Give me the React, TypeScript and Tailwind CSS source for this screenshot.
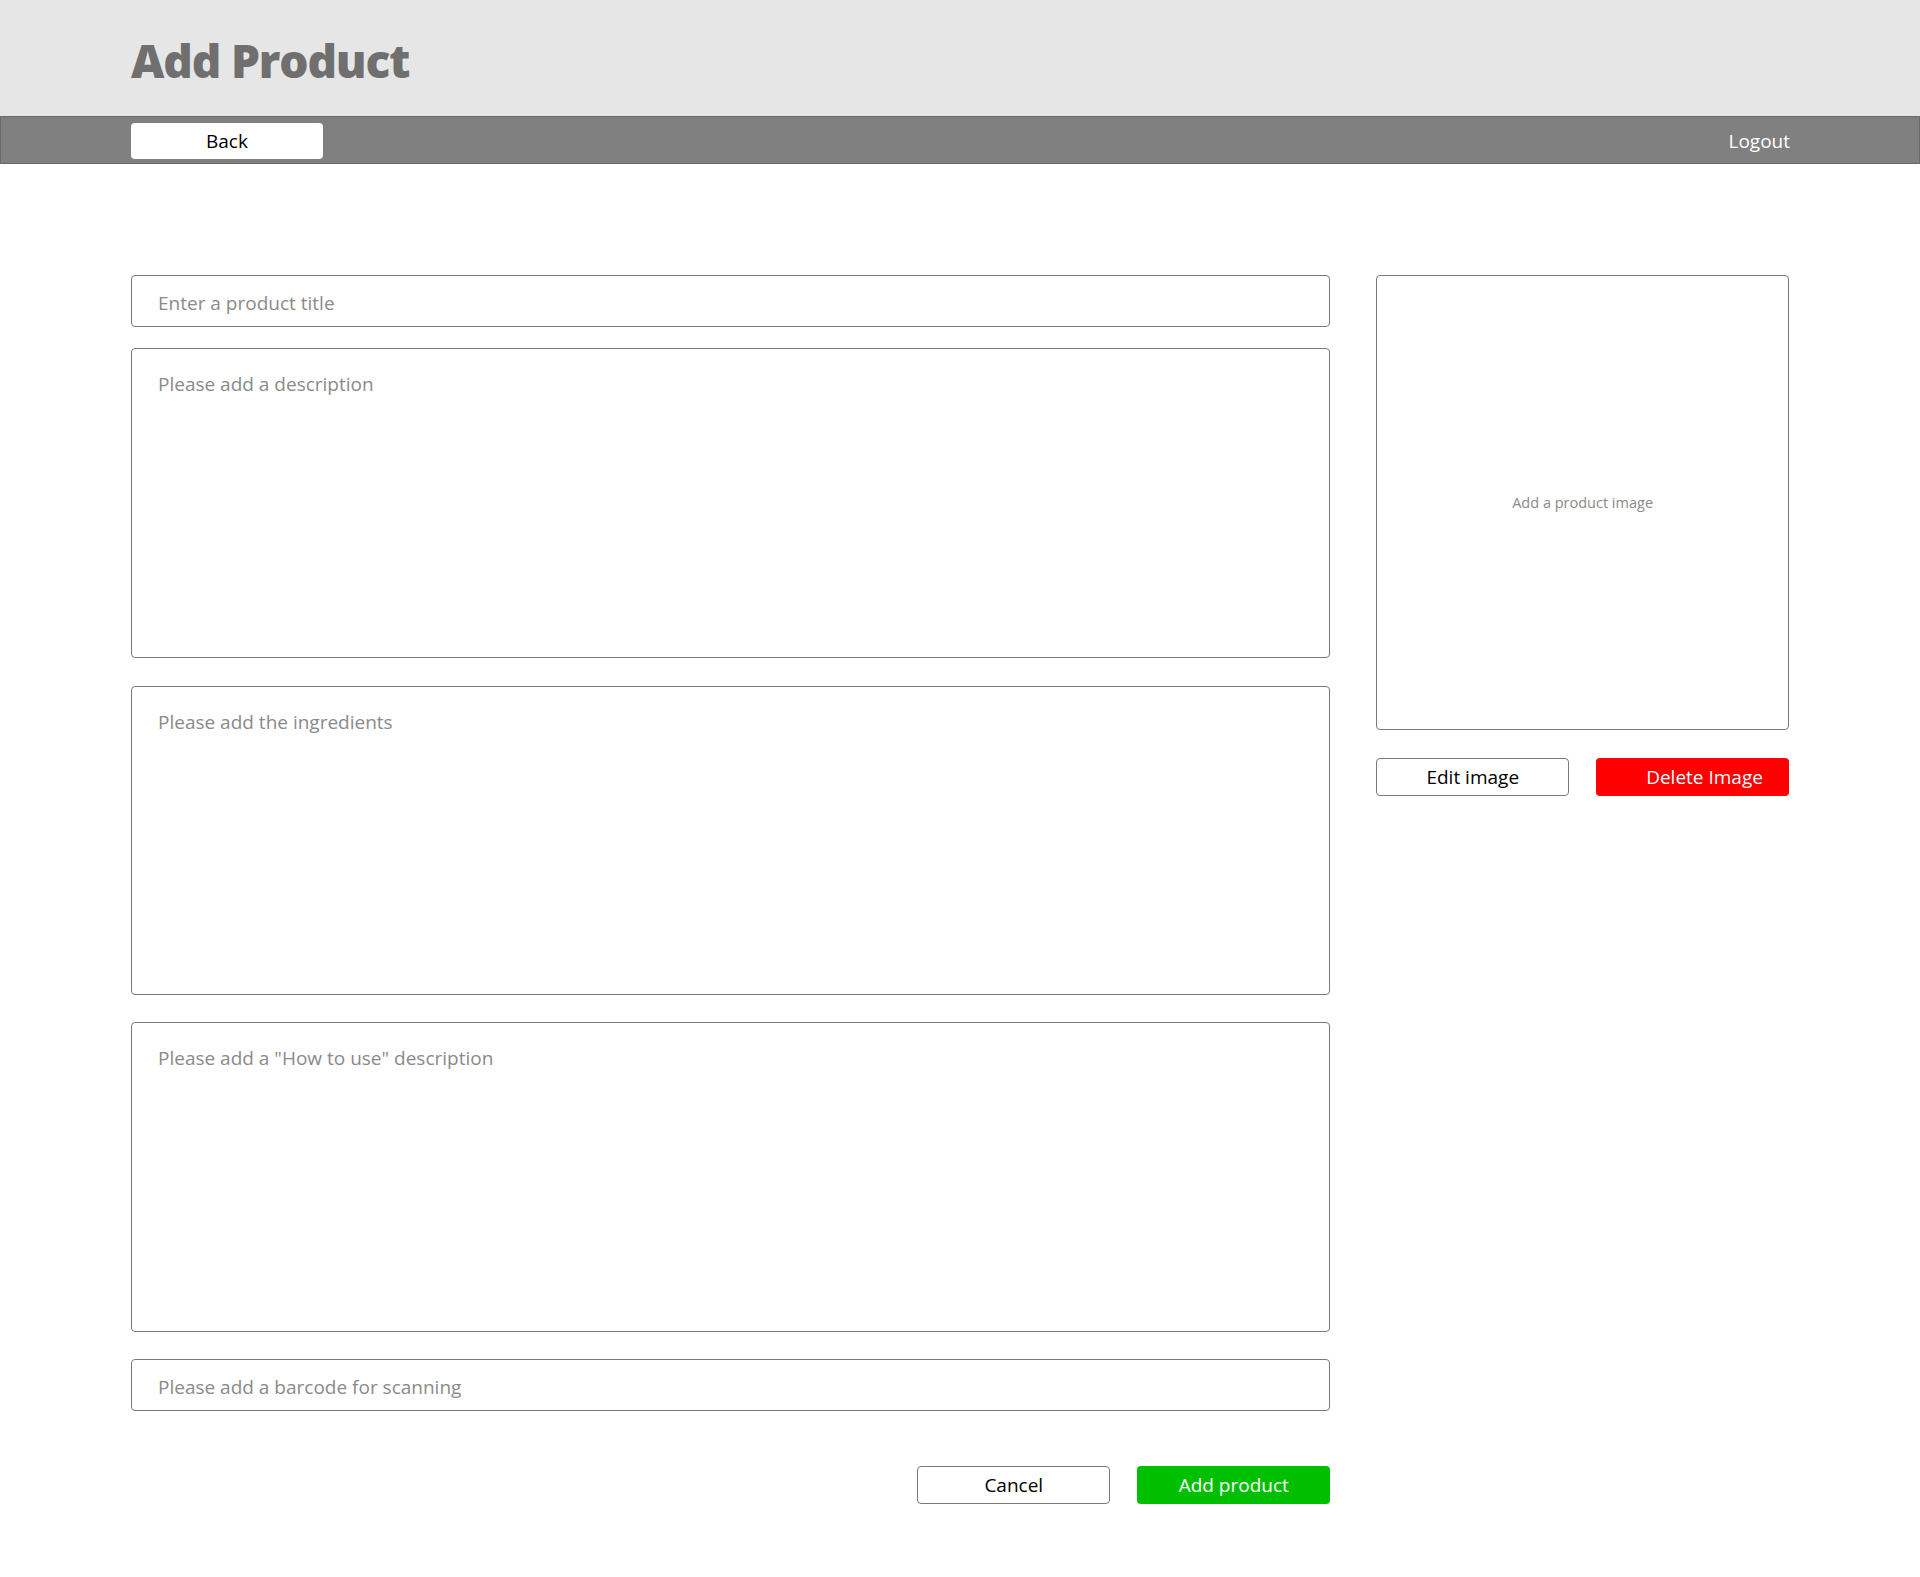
const fieldClass =
  "w-full border border-[#7a7a7a] rounded-[4px] px-[26px] text-[19px] text-[#8a8a8a] bg-white";

function TextArea({ placeholder, height }: { placeholder: string; height: string }) {
  return (
    <div className={`${fieldClass} ${height} pt-[21px]`}>
      <p>{placeholder}</p>
    </div>
  );
}

function TextInput({ placeholder }: { placeholder: string }) {
  return (
    <div className={`${fieldClass} h-[52px] flex items-center pt-[4px]`}>
      <p>{placeholder}</p>
    </div>
  );
}

export default function App() {
  return (
    <div className="min-h-[1577px] bg-white font-['Segoe_UI','Open_Sans',sans-serif]">
      {/* Header */}
      <header className="h-[116px] bg-[#e6e6e6] flex items-center px-[131px]">
        <h1 className="text-[46px] font-extrabold text-[#6f6f6f] pt-[4px] tracking-tight">
          Add Product
        </h1>
      </header>
      <nav className="h-[48px] bg-[#808080] border border-[#6a6a6a] flex items-center justify-between pl-[130px] pr-[129px]">
        <button className="w-[192px] h-[36px] bg-white rounded-[4px] text-[19px] text-black mt-[2px]">
          Back
        </button>
        <button className="text-[19px] text-white mt-[3px]">Logout</button>
      </nav>

      {/* Form */}
      <main className="px-[131px] pt-[111px] flex gap-[46px]">
        <section className="w-[1200px] flex flex-col">
          <TextInput placeholder="Enter a product title" />
          <div className="mt-[21px] flex flex-col">
            <TextArea height="h-[310px]" placeholder="Please add a description" />
            <div className="mt-[28px]">
              <TextArea height="h-[309px]" placeholder="Please add the ingredients" />
            </div>
            <div className="mt-[27px]">
              <TextArea height="h-[310px]" placeholder='Please add a "How to use" description' />
            </div>
          </div>
          <div className="mt-[27px]">
            <TextInput placeholder="Please add a barcode for scanning" />
          </div>
          <div className="mt-[55px] flex justify-end gap-[27px]">
            <button className="w-[193px] h-[38px] border border-[#7a7a7a] rounded-[4px] text-[19px] text-black">
              Cancel
            </button>
            <button className="w-[193px] h-[38px] bg-[#00bf00] rounded-[4px] text-[19px] text-white">
              Add product
            </button>
          </div>
        </section>

        <aside className="w-[413px] flex flex-col">
          <div className="h-[455px] border border-[#7a7a7a] rounded-[4px] flex items-center justify-center">
            <p className="text-[14.5px] text-[#8a8a8a]">Add a product image</p>
          </div>
          <div className="mt-[28px] flex justify-between">
            <button className="w-[193px] h-[38px] border border-[#7a7a7a] rounded-[4px] text-[19px] text-black">
              Edit image
            </button>
            <button className="w-[193px] h-[38px] bg-[#ff0000] rounded-[4px] text-[19px] text-white pl-6">
              Delete Image
            </button>
          </div>
        </aside>
      </main>
    </div>
  );
}
